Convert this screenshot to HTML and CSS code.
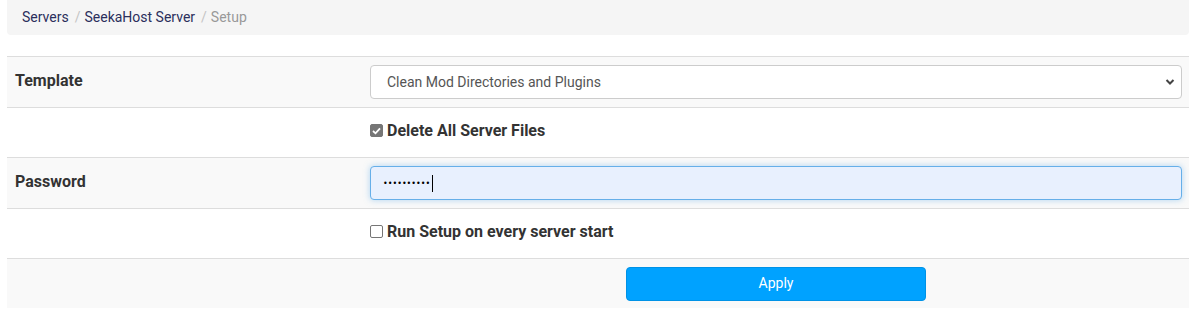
FILE: index.html
```html
<!DOCTYPE html>
<html lang="en">
<head>
    <meta charset="UTF-8">
    <meta name="viewport" content="width=device-width, initial-scale=1.0">
    <title>Setup</title>
    <link rel="stylesheet" href="styles.css">
</head>
<body>
    <div class="breadcrumb">
        <a href="#">Servers</a>
        <span class="sep">/</span>
        <a href="#">SeekaHost Server</a>
        <span class="sep">/</span>
        <span class="active">Setup</span>
    </div>

    <div class="setup-table">
        <div class="row striped tall">
            <div class="cell label">Template</div>
            <div class="cell">
                <div class="select">
                    <span>Clean Mod Directories and Plugins</span>
                    <svg width="10" height="8" viewBox="0 0 10 8"><path d="M1.5 2 L5 5.5 L8.5 2" fill="none" stroke="#444" stroke-width="2"/></svg>
                </div>
            </div>
        </div>
        <div class="row">
            <div class="cell label"></div>
            <div class="cell">
                <label class="check"><span class="box checked"><svg width="9" height="8" viewBox="0 0 9 8"><path d="M1 4 L3.5 6.3 L8 1.3" fill="none" stroke="#fff" stroke-width="1.8"/></svg></span>Delete All Server Files</label>
            </div>
        </div>
        <div class="row striped tall">
            <div class="cell label">Password</div>
            <div class="cell">
                <div class="input focus"><span class="dots">••••••••••</span><span class="caret"></span></div>
            </div>
        </div>
        <div class="row">
            <div class="cell label"></div>
            <div class="cell">
                <label class="check"><span class="box"></span>Run Setup on every server start</label>
            </div>
        </div>
        <div class="row striped">
            <div class="cell label"></div>
            <div class="cell center">
                <button class="apply">Apply</button>
            </div>
        </div>
    </div>
</body>
</html>
```

FILE: styles.css
```css
body {
    margin: 0;
    padding: 0 7px;
    font-family: Roboto, "Liberation Sans", sans-serif;
    font-size: 14px;
    color: #333;
    background: #fff;
}
.breadcrumb {
    height: 35px;
    display: flex;
    align-items: center;
    padding: 0 15px 2px;
    box-sizing: border-box;
    background: #f5f5f5;
    border-radius: 0 0 4px 4px;
    margin-bottom: 21px;
}
.breadcrumb a {
    color: #2b2f5c;
    text-decoration: none;
}
.breadcrumb .sep {
    color: #c4c4c4;
    padding: 0 4px 0 6px;
}
.breadcrumb .active {
    color: #999;
}
.row {
    display: grid;
    grid-template-columns: 355px 1fr;
    border-top: 1px solid #ddd;
    height: 50px;
    box-sizing: border-box;
}
.row.tall {
    height: 51px;
}
.row.striped {
    background: #f9f9f9;
}
.cell {
    display: flex;
    align-items: center;
    padding: 0 7px 0 8px;
}
.cell.label {
    font-weight: bold;
    font-size: 16px;
    color: #333;
    padding-bottom: 3px;
}
.cell.center {
    justify-content: center;
}
.select {
    flex: 1;
    height: 34px;
    box-sizing: border-box;
    border: 1px solid #ccc;
    border-radius: 4px;
    background: #fff;
    display: flex;
    align-items: center;
    justify-content: space-between;
    padding: 0 6px 1px 16px;
    color: #555;
}
.input {
    flex: 1;
    height: 34px;
    box-sizing: border-box;
    border: 1px solid #66afe9;
    border-radius: 4px;
    background: #e8f0fe;
    box-shadow: 0 0 6px rgba(102, 175, 233, 0.5);
    display: flex;
    align-items: center;
    padding: 0 12px;
}
.dots {
    font-family: "DejaVu Sans", sans-serif;
    font-size: 8px;
    letter-spacing: 0;
    color: #000;
}
.caret {
    display: inline-block;
    width: 1px;
    height: 17px;
    background: #000;
    margin-left: 2px;
}
.check {
    display: flex;
    align-items: center;
    font-weight: bold;
    font-size: 16px;
    color: #333;
    margin-top: -4px;
}
.box {
    width: 13px;
    height: 13px;
    box-sizing: border-box;
    border: 1px solid #767676;
    border-radius: 2px;
    background: #fff;
    margin-right: 4px;
    display: flex;
    align-items: center;
    justify-content: center;
}
.box.checked {
    background: #767676;
}
.apply {
    width: 300px;
    height: 34px;
    background: #00a2ff;
    color: #fff;
    border: 1px solid #0092e6;
    border-radius: 4px;
    font-family: Roboto, "Liberation Sans", sans-serif;
    font-size: 14px;
    padding-bottom: 2px;
}
```
